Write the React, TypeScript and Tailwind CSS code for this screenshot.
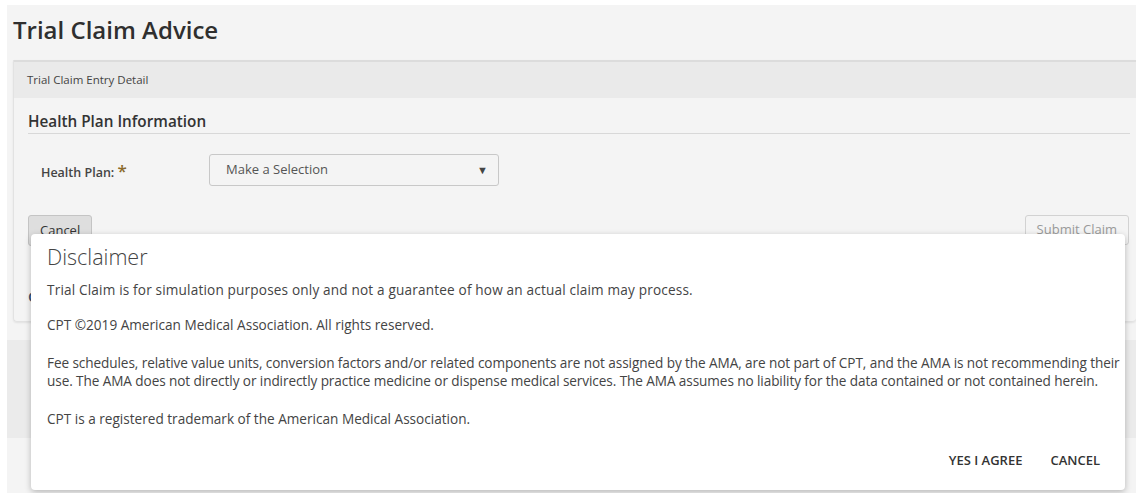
import React from "react";

export default function App() {
  return (
    <div className="relative min-h-[493px] bg-white pl-[7px] pt-[5px] font-['Open_Sans',sans-serif] text-[#333]">
      <div className="min-h-[488px] bg-[#f4f4f4]">
        <h1 className="h-[55px] pl-[6px] pt-[9px] text-[24px] font-semibold leading-[32px] text-[#2f2f2f]">
          Trial Claim Advice
        </h1>

        {/* Claim entry panel */}
        <div className="ml-[6px] rounded-b-[4px] border-l border-b border-[#e2e2e2] shadow-[0_1px_2px_rgba(0,0,0,0.08)]">
          <div className="flex h-[38px] items-center border-t-2 border-[#dcdcdc] bg-[#eaeaea] px-[13px] text-[11.5px] text-[#444]">
            Trial Claim Entry Detail
          </div>
          <div className="pl-[14px] pr-[6px]">
            <h2 className="mt-[13px] border-b border-[#d8d8d8] pb-[1px] text-[15.3px] font-semibold leading-[21px] text-[#333]">
              Health Plan Information
            </h2>
            <div className="mt-[20px] flex items-center">
              <label className="w-[181px] pl-[13px] pt-[4px] text-[12.5px] font-semibold text-[#444]">
                Health Plan: <span className="text-[17px] leading-none text-[#8a6a2a]">*</span>
              </label>
              <div className="flex h-[32px] w-[290px] items-center justify-between rounded-[3px] border border-[#c8c8c8] bg-[#f4f4f4] pl-[16px] pr-[10px] text-[13px] text-[#555]">
                <span>Make a Selection</span>
                <span className="text-[11px] text-[#444]">▼</span>
              </div>
            </div>
            <div className="mt-[29px] flex items-start justify-between pr-[1px]">
              <button className="h-[31px] rounded-[3px] border border-[#c4c4c4] bg-[#dedede] px-[11px] text-[13px] text-[#333]">
                Cancel
              </button>
              <button className="h-[30px] rounded-[3px] border border-[#d2d2d2] bg-[#f4f4f4] px-[11px] text-[13px] text-[#9a9a9a]">
                Submit Claim
              </button>
            </div>
            <h2 className="mt-[40px] pb-[15px] text-[15px] font-semibold leading-[20px] text-[#35506e]">
              C
            </h2>
          </div>
        </div>

        <div className="mt-[18px] h-[98px] bg-[#ebebeb]" />
      </div>

      {/* Disclaimer dialog */}
      <div className="absolute left-[31px] top-[234px] flex h-[256px] w-[1094px] flex-col rounded-[4px] bg-white pl-[16px] shadow-[0_2px_6px_rgba(0,0,0,0.25)]">
        <h3 className="pt-[9px] text-[21.5px] font-light leading-[28px] text-[#444]">Disclaimer</h3>
        <div className="mt-[10px] text-[13.6px] leading-[18px] text-[#444]">
          <p className="tracking-[0.17px]">
            Trial Claim is for simulation purposes only and not a guarantee of how an actual claim may process.
          </p>
          <p className="mt-[17px]">CPT ©2019 American Medical Association. All rights reserved.</p>
          <p className="mt-[20px] tracking-[-0.09px]">
            <span className="whitespace-nowrap">
              Fee schedules, relative value units, conversion factors and/or related components are not assigned by the AMA, are not part of CPT, and the AMA is not recommending their
            </span>
            <br />
            use. The AMA does not directly or indirectly practice medicine or dispense medical services. The AMA assumes no liability for the data contained or not contained herein.
          </p>
          <p className="mt-[20px]">CPT is a registered trademark of the American Medical Association.</p>
        </div>
        <div className="mt-auto mb-[20px] flex justify-end gap-[28px] pr-[25px] text-[13px] font-semibold text-[#333]">
          <button>YES I AGREE</button>
          <button>CANCEL</button>
        </div>
      </div>
    </div>
  );
}
